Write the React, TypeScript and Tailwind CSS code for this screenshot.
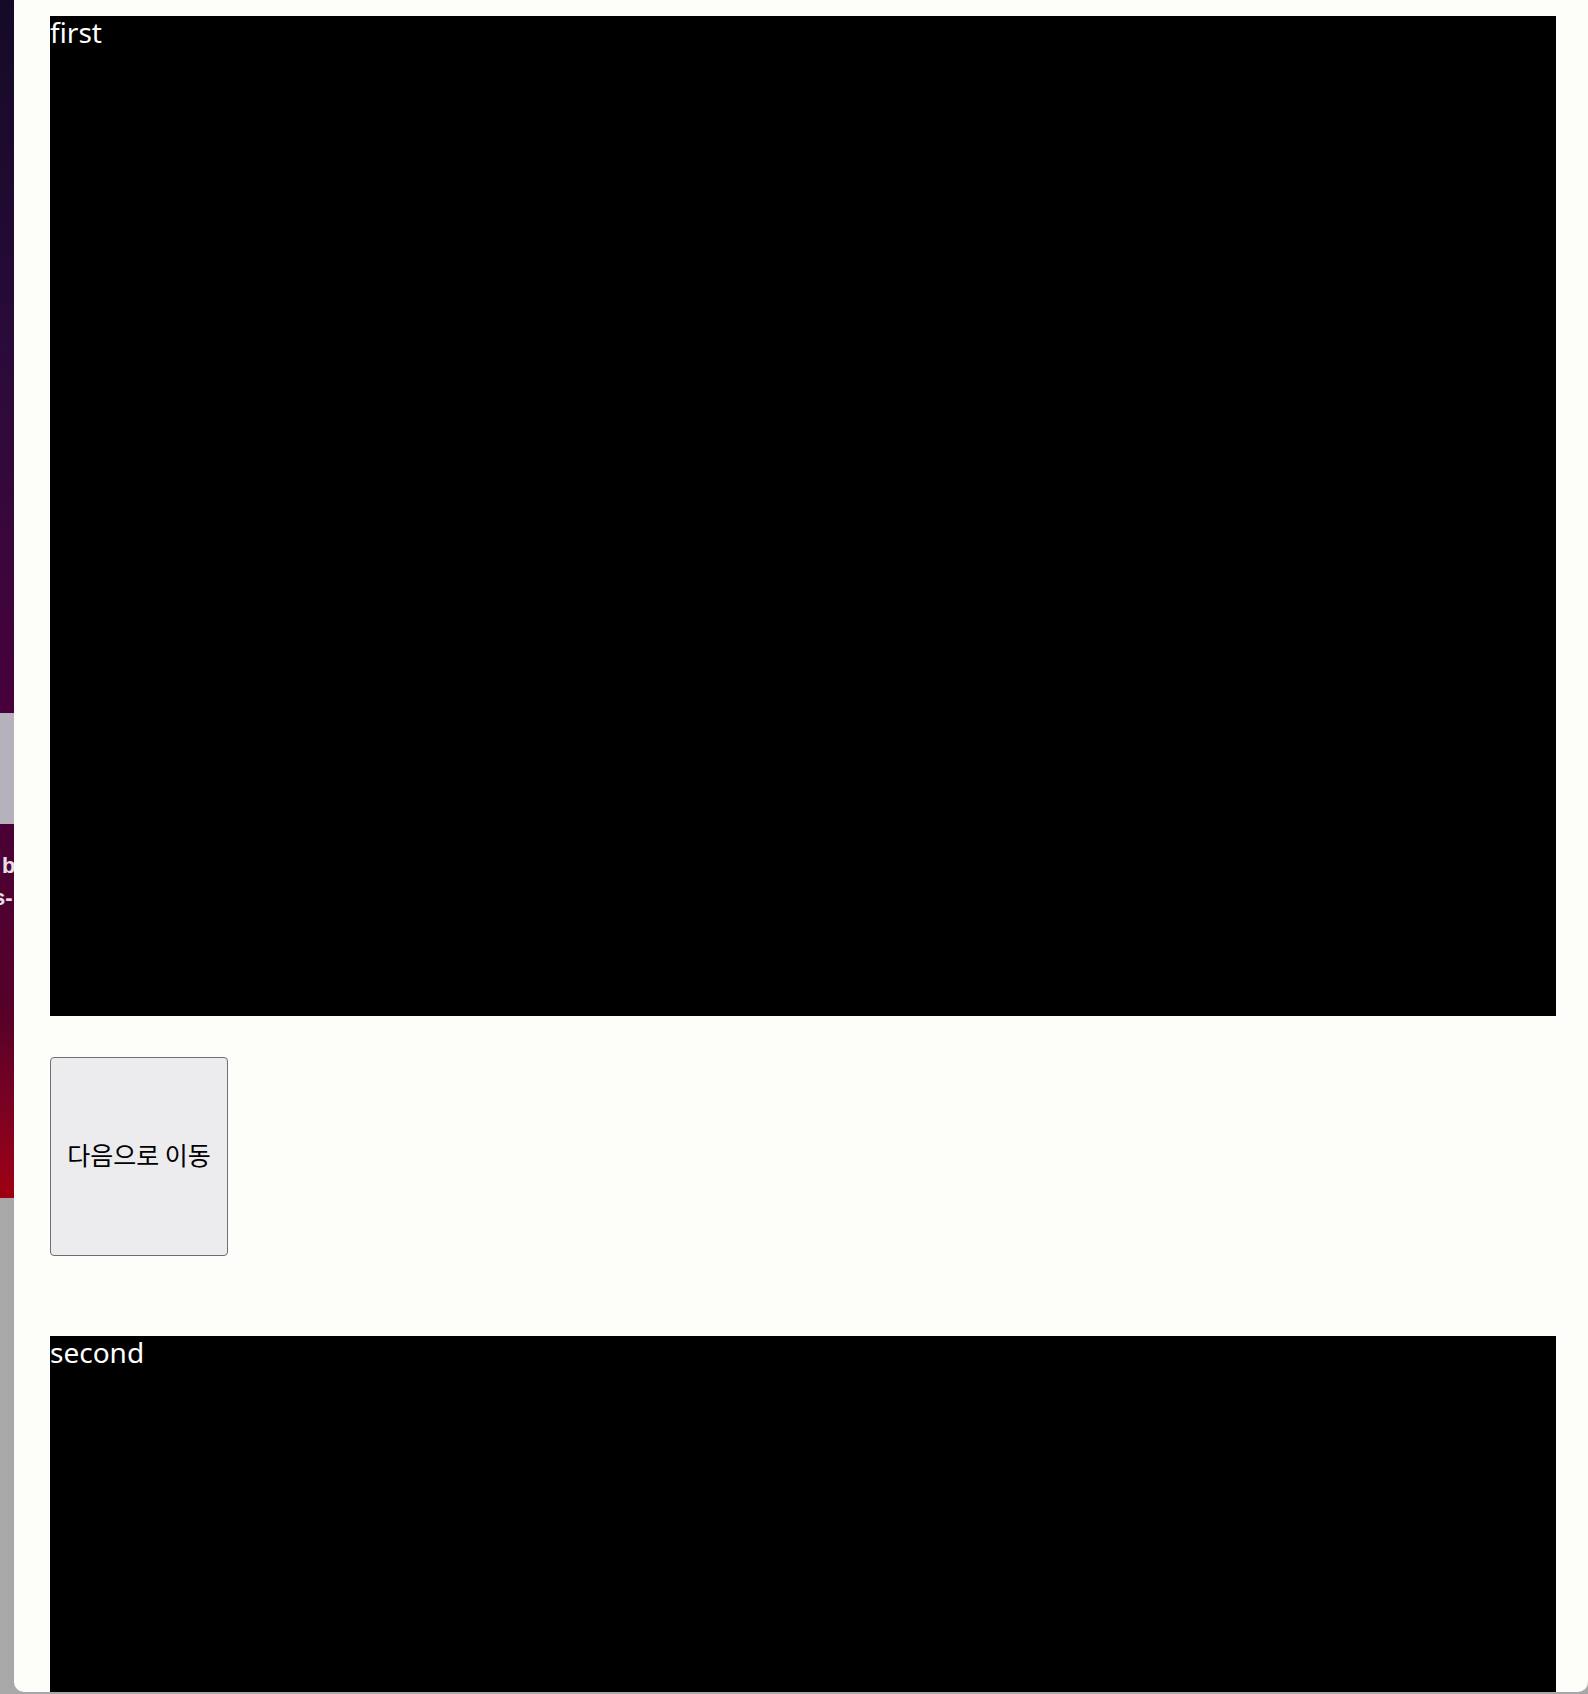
import React from 'react';

const sans = { fontFamily: '"Noto Sans", "Noto Sans CJK KR", sans-serif' };
const label = { fontFamily: '"Liberation Sans", sans-serif' };

function DesktopStrip() {
  return (
    <div className="flex w-[14px] shrink-0 flex-col overflow-hidden">
      <div className="h-[713px] bg-gradient-to-b from-[#140a26] via-[#2a0a3a] to-[#48003a]" />
      <div className="h-[111px] bg-[#b6b2bc]" />
      <div className="flex h-[374px] flex-col bg-gradient-to-b from-[#4a0036] via-[#560028] to-[#a00010] pt-[26px] text-[22px] font-bold leading-[32px] text-[#e8e0e8]">
        <span className="ml-[2px] whitespace-nowrap" style={label}>b</span>
        <span className="-ml-[7px] whitespace-nowrap" style={label}>s-</span>
      </div>
      <div className="flex-1 bg-[#a8a8a8]" />
    </div>
  );
}

export default function App() {
  return (
    <div className="flex h-[1694px] w-[1588px] overflow-hidden bg-[#a8a8a8]">
      <DesktopStrip />
      <div
        className="flex h-[1692px] flex-1 flex-col overflow-hidden rounded-b-[10px] bg-[#fdfdfa] pl-[36px] pr-[32px] pt-[16px]"
        style={sans}
      >
        <div className="h-[1000px] shrink-0 bg-black text-[28px] leading-[32px] text-white">first</div>

        <button
          className="mt-[41px] flex h-[199px] w-[178px] shrink-0 items-center justify-center rounded-[4px] border border-[#6e6e6e] bg-[#ecebee] pb-[4px] text-[25px] text-black"
          style={{ fontFamily: '"Noto Sans CJK KR", sans-serif' }}
        >
          다음으로 이동
        </button>

        <div className="mt-[80px] h-[600px] shrink-0 bg-black text-[28px] leading-[32px] text-white">second</div>
      </div>
    </div>
  );
}
